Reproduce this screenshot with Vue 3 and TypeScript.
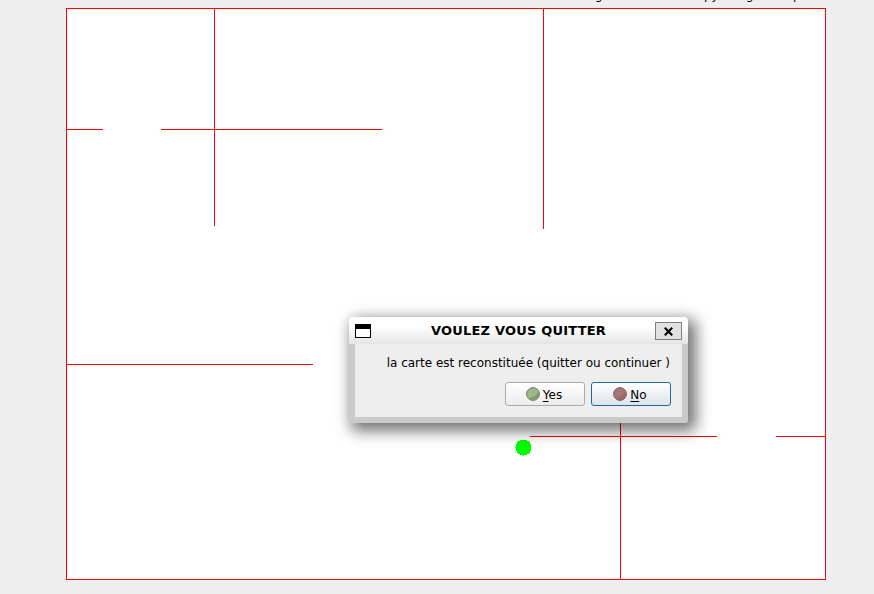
<script setup lang="ts">
interface Wall {
  x: number
  y: number
  w: number
  h: number
}

const walls: Wall[] = [
  { x: 214, y: 8, w: 1, h: 218 },
  { x: 543, y: 8, w: 1, h: 221 },
  { x: 66, y: 129, w: 37, h: 1 },
  { x: 161, y: 129, w: 221, h: 1 },
  { x: 66, y: 364, w: 247, h: 1 },
  { x: 530, y: 436, w: 187, h: 1 },
  { x: 776, y: 436, w: 50, h: 1 },
  { x: 620, y: 400, w: 1, h: 180 },
]
</script>

<template>
  <main class="screen">
    <header class="caption">
      <span class="c1">g</span><span class="c2">py</span><span class="c3">g</span><span class="c4">p</span>
    </header>
    <section class="map"></section>
    <svg class="walls" width="874" height="594" shape-rendering="crispEdges">
      <rect v-for="(w, i) in walls" :key="i" :x="w.x" :y="w.y" :width="w.w" :height="w.h" fill="#f00" />
      <circle cx="523.5" cy="447.5" r="8" fill="#0f0" />
    </svg>

    <div class="dialog" role="dialog">
      <div class="titlebar">
        <svg class="winicon" width="16" height="14" shape-rendering="crispEdges">
          <rect width="16" height="14" fill="#000" />
          <rect x="1" y="5" width="14" height="8" fill="#fff" />
        </svg>
        <h1 class="title">VOULEZ VOUS QUITTER</h1>
        <button class="close" aria-label="Fermer">
          <svg width="9" height="9" viewBox="0 0 9 9">
            <path d="M.8 .8L8.2 8.2M8.2 .8L.8 8.2" stroke="#000" stroke-width="2.1" />
          </svg>
        </button>
      </div>
      <div class="content">
        <p class="message">la carte est reconstituée (quitter ou continuer )</p>
        <div class="actions">
          <button class="btn">
            <svg width="14" height="14" viewBox="0 0 14 14">
              <circle cx="7" cy="7" r="6.4" fill="#a0b888" stroke="#707a68" />
              <path d="M12.6 4.5A6 6 0 0 1 3 11.5Q9.5 9.5 12.6 4.5Z" fill="#7f9c6b" />
            </svg>
            <span><u>Y</u>es</span>
          </button>
          <button class="btn focused">
            <svg width="14" height="14" viewBox="0 0 14 14">
              <circle cx="7" cy="7" r="6.4" fill="#a87676" stroke="#806464" />
              <path d="M12.6 4.5A6 6 0 0 1 3 11.5Q9.5 9.5 12.6 4.5Z" fill="#9b6767" />
            </svg>
            <span><u>N</u>o</span>
          </button>
        </div>
      </div>
    </div>
  </main>
</template>

<style>
body { margin: 0; background: #eee; }
</style>

<style scoped>
.screen {
  position: relative;
  box-sizing: border-box;
  width: 874px;
  height: 594px;
  overflow: hidden;
  background: #eee;
  color: #000;
  font: 12px/14px "DejaVu Sans", sans-serif;
}
.caption {
  display: flex;
  height: 8px;
  padding-left: 595px;
  line-height: 14px;
}
.caption span { margin-top: -12px; }
.c1 { width: 109px; }
.c2 { width: 42px; }
.c3 { width: 47px; }
.map {
  box-sizing: border-box;
  width: 760px;
  height: 572px;
  margin-left: 66px;
  border: 1px solid #f00;
  background: #fff;
}
.walls { position: absolute; top: 0; left: 0; }
.dialog {
  position: absolute;
  left: 349px;
  top: 317px;
  box-sizing: border-box;
  width: 339px;
  height: 106px;
  padding: 0 6px 6px;
  border-radius: 4px 4px 2px 2px;
  background: #cacaca;
  box-shadow: 5px 5px 15px 3px rgba(0, 0, 0, 0.55);
}
.titlebar {
  display: flex;
  align-items: center;
  box-sizing: border-box;
  height: 27px;
  margin: 0 -6px;
  padding: 1px 6px 0;
  border-radius: 4px 4px 0 0;
  background: linear-gradient(#fff 0%, #fff 35%, #e4e4e4 100%);
}
.title {
  flex: 1;
  margin: -1px 0 0;
  padding-left: 11px;
  text-align: center;
  font-size: 13px;
  line-height: 16px;
  font-weight: bold;
  letter-spacing: 0.2px;
  white-space: nowrap;
}
.close {
  display: flex;
  align-items: center;
  justify-content: center;
  box-sizing: border-box;
  width: 27px;
  height: 18px;
  padding: 1px 0 0;
  border: 1px solid #7c7c7c;
  background: #e1e1e1;
}
.content {
  box-sizing: border-box;
  height: 73px;
  padding: 12px 11px 0;
  background: #eee;
}
.message {
  margin: 0;
  height: 14px;
  padding-right: 1px;
  text-align: right;
  white-space: nowrap;
}
.actions {
  display: flex;
  justify-content: flex-end;
  gap: 6px;
  margin-top: 12px;
}
.btn {
  display: flex;
  align-items: center;
  justify-content: center;
  gap: 3px;
  box-sizing: border-box;
  width: 80px;
  height: 24px;
  padding: 0 2px 0 0;
  border: 1px solid #aaa;
  border-radius: 3px;
  background: linear-gradient(#fff, #ececec);
  color: #000;
  font: inherit;
}
.btn span { padding-top: 2px; }
.focused {
  border-color: #1e6a98;
  background: linear-gradient(#fff, #dce4ea);
}
.btn u { text-underline-offset: 2px; text-decoration-thickness: 1px; }
</style>
